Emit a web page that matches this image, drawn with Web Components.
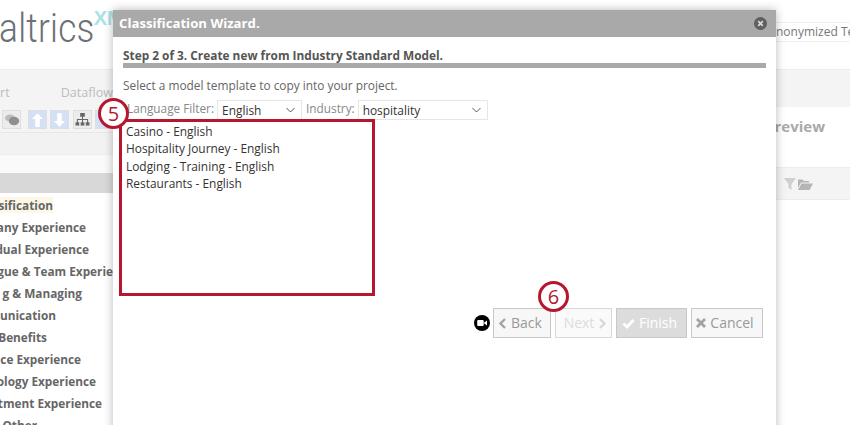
<!DOCTYPE html>
<html>
<head>
<meta charset="utf-8">
<title>Classification Wizard</title>
<style>
  html, body { margin: 0; height: 100%; overflow: hidden; background: #fff; font-family: "Open Sans", sans-serif; }
</style>
</head>
<body>
<app-page>
  <top-header slot="header"></top-header>
  <tool-panel slot="left"></tool-panel>
  <side-nav slot="left">
    <nav-row end="53" active>sification</nav-row>
    <nav-row end="86">any Experience</nav-row>
    <nav-row end="89">dual Experience</nav-row>
    <nav-row end="113">gue &amp; Team Experie</nav-row>
    <nav-row end="82">g &amp; Managing</nav-row>
    <nav-row end="56">unication</nav-row>
    <nav-row end="47">Benefits</nav-row>
    <nav-row end="81">ce Experience</nav-row>
    <nav-row end="96">ology Experience</nav-row>
    <nav-row end="102">ctment Experience</nav-row>
    <nav-row end="37">Other</nav-row>
  </side-nav>
  <preview-panel slot="right"></preview-panel>

  <wizard-dialog slot="overlay" heading="Classification Wizard.">
    <h2 slot="step">Step 2 of 3. Create new from Industry Standard Model.</h2>
    <span slot="intro">Select a model template to copy into your project.</span>
    <filter-select slot="filters" label="Language Filter:" value="English" width="85"></filter-select>
    <filter-select slot="filters" label="Industry:" value="hospitality" width="130"></filter-select>
    <div slot="models">Casino - English</div>
    <div slot="models">Hospitality Journey - English</div>
    <div slot="models">Lodging - Training - English</div>
    <div slot="models">Restaurants - English</div>
    <wizard-button slot="actions" icon="back" w="58">Back</wizard-button>
    <wizard-button slot="actions" icon="next" w="57" disabled>Next</wizard-button>
    <wizard-button slot="actions" icon="check" w="71" primary>Finish</wizard-button>
    <wizard-button slot="actions" icon="cancel" w="72">Cancel</wizard-button>
  </wizard-dialog>

  <step-callout slot="overlay" x="98" y="98">5</step-callout>
  <step-callout slot="overlay" x="538" y="281">6</step-callout>
</app-page>

<script>
function shadow(el, html) {
  el.attachShadow({ mode: 'open' }).innerHTML = html;
}

class AppPage extends HTMLElement {
  constructor() {
    super();
    shadow(this, `
      <style>
        :host { display: grid; position: relative; width: 850px; height: 425px; overflow: hidden;
          grid-template-columns: 400px 450px; grid-template-rows: 70px 355px; }
        .head { grid-column: 1 / 3; }
        .col { min-width: 0; }
      </style>
      <div class="head"><slot name="header"></slot></div>
      <div class="col"><slot name="left"></slot></div>
      <div class="col"><slot name="right"></slot></div>
      <slot name="overlay"></slot>
    `);
  }
}

class TopHeader extends HTMLElement {
  constructor() {
    super();
    shadow(this, `
      <style>
        :host { display: flex; height: 70px; box-sizing: border-box; justify-content: space-between;
          border-bottom: 1px solid #ececec; background: #fff; overflow: hidden; }
        .logo { display: flex; align-items: flex-start; width: 113px; overflow: hidden; }
        .name { font: 300 40px/1 Roboto, sans-serif; color: #6c7176; margin: 9px -14px 0 -1px; transform: scaleX(.88); transform-origin: left top; letter-spacing: .3px; }
        .xm { font: 700 20px/1 "Liberation Sans", sans-serif; color: #a9e3e8; margin-top: 8px; white-space: nowrap; }
        .project { align-self: flex-start; margin-top: 22px; width: 74px; height: 20px; box-sizing: border-box; overflow: hidden;
          border: 1px solid #f0f0f0; border-right: 0; border-left: 0; font: 12px/18px "Open Sans", sans-serif; color: #777; white-space: nowrap; }
      </style>
      <div class="logo"><span class="name">altrics</span><span class="xm">XM</span></div>
      <div class="project">nonymized Test</div>
    `);
  }
}

class ToolPanel extends HTMLElement {
  constructor() {
    super();
    const btn = (bg, svg, gap) => `<span class="b" style="background:${bg};margin-left:${gap || 0}px">${svg}</span>`;
    shadow(this, `
      <style>
        :host { display: block; background: #f4f4f4; }
        .menu { display: flex; gap: 51px; height: 40px; font: 12.600px/46px "Open Sans", sans-serif; color: #bdbdbd; justify-content: flex-end; width: 113px; white-space: nowrap; }
        .tools { display: flex; gap: 3px; box-sizing: border-box; height: 23px; padding-left: 2px; border-bottom: 1px solid #e8e8e8; }
        .b { display: flex; align-items: center; justify-content: center; box-sizing: border-box; width: 19px; height: 19px; border: 1px solid #dedede; }
        .sub { box-sizing: border-box; height: 22px; background: #f2f2f2; border-bottom: 1px solid #ededed; }
        .gap { height: 18px; background: #fafafa; }
        .bar { height: 20px; background: #d8d8d8; }
      </style>
      <div class="menu"><span>ort</span><span>Dataflow</span></div>
      <div class="tools">
        ${btn('#ececec', '<svg width="16" height="14" viewBox="0 0 16 14"><ellipse cx="6" cy="5" rx="5" ry="3.6" fill="#bdbdbd"/><ellipse cx="10" cy="8" rx="5.2" ry="4.2" fill="#8f8f8f"/></svg>')}
        ${btn('#d3e0f5', '<svg width="11" height="14" viewBox="0 0 12 15"><path d="M6 0l6 6.500H8.500V15h-5V6.500H0z" fill="#fff"/></svg>', 4)}
        ${btn('#d3e0f5', '<svg width="11" height="14" viewBox="0 0 12 15"><path d="M6 15L0 8.500H3.500V0h5V8.500H12z" fill="#fff"/></svg>')}
        ${btn('#ececec', '<svg width="15" height="13" viewBox="0 0 16 14" fill="none" stroke="#666" stroke-width="1.100"><path d="M8 3v8M2.500 11V7h11v4"/><rect x="5.500" y="0" width="5" height="4" fill="#666" stroke="none"/><rect x="0.500" y="10" width="4" height="3.500" fill="#666" stroke="none"/><rect x="6" y="10" width="4" height="3.500" fill="#666" stroke="none"/><rect x="11.500" y="10" width="4" height="3.500" fill="#666" stroke="none"/></svg>', 1)}
        ${btn('#d3e0f5', '')}
      </div>
      <div class="sub"></div>
      <div class="gap"></div>
      <div class="bar"></div>
    `);
  }
}

class SideNav extends HTMLElement {
  constructor() {
    super();
    shadow(this, `
      <style>:host { display: flex; flex-direction: column; gap: 6px; padding-top: 4px; background: #fff; }</style>
      <slot></slot>
    `);
  }
}

class NavRow extends HTMLElement {
  constructor() {
    super();
    shadow(this, `
      <style>
        :host { display: flex; justify-content: flex-end; height: 16px; white-space: nowrap;
          font: 700 11.800px/17px "Open Sans", sans-serif; color: #666; }
        :host([active]) { background: #fdf8e6; }
      </style>
      <slot></slot>
    `);
  }
  connectedCallback() {
    this.style.width = this.getAttribute('end') + 'px';
  }
}

class PreviewPanel extends HTMLElement {
  constructor() {
    super();
    shadow(this, `
      <style>
        :host { display: block; }
        .band { height: 37px; background: #f4f4f4; }
        .title { height: 60px; box-sizing: border-box; padding: 7px 25px 0 0; text-align: right; font: 700 15px/24px "Open Sans", sans-serif; color: #a9a9a9; }
        .tools { display: flex; justify-content: flex-end; align-items: center; gap: 2px; height: 33px; box-sizing: border-box; padding-right: 37px;
          background: #f4f4f4; border-top: 1px solid #ececec; border-bottom: 1px solid #ececec; }
      </style>
      <div class="band"></div>
      <div class="title">review</div>
      <div class="tools">
        <svg width="12" height="12" viewBox="0 0 12 12"><path d="M0 0h12L7.500 6v6l-3-2V6z" fill="#cfcfcf"/></svg>
        <svg width="15" height="12" viewBox="0 0 15 12"><path d="M0 1.500h4.500L6 3h5v1.500H3L0 10z M3.500 5.500H15L11.500 12H0z" fill="#b5b5b5"/></svg>
      </div>
    `);
  }
}

class WizardDialog extends HTMLElement {
  constructor() {
    super();
    shadow(this, `
      <style>
        :host { display: flex; flex-direction: column; position: absolute; left: 113px; top: 10px; width: 663px; height: 425px;
          background: #fff; box-shadow: 0 0 9px rgba(0, 0, 0, .28); color: #555; font: 12px/17px "Open Sans", sans-serif; }
        .title { display: flex; align-items: center; justify-content: space-between; height: 27px; padding: 0 9px 0 6px; background: #a9a9a9;
          color: #fff; font: 700 13.200px/27px "Open Sans", sans-serif; }
        .close { width: 13px; height: 13px; }
        .body { display: flex; flex-direction: column; padding: 10px 10px 0 7px; }
        .step { border-bottom: 5px solid #a9a9a9; margin-left: 3px; height: 16px; }
        ::slotted(h2) { margin: 0; font: 700 11.850px/17px "Open Sans", sans-serif; color: #555; }
        .intro { margin: 9px 0 0 3px; height: 17px; color: #666; font-size: 11.870px; }
        .filters { display: flex; gap: 4px; margin: 6px 0 0 7px; height: 19px; }
        .models { box-sizing: border-box; width: 256px; height: 177px; margin-left: -1px; padding: 0 4px; border: 3px solid #b5182e; color: #333; font-size: 11.900px; line-height: 17.300px; white-space: nowrap; }
        .list { margin-top: 1px; }
        .actions { display: flex; justify-content: flex-end; align-items: center; gap: 4px; margin: 12px 3px 0 0; }
        .video { margin-right: -1px; }
      </style>
      <div class="title">
        <span class="heading"></span>
        <svg class="close" viewBox="0 0 13 13"><circle cx="6.500" cy="6.500" r="6.500" fill="#5f5f5f"/><path d="M4.200 4.200l4.600 4.600M8.800 4.200l-4.600 4.600" stroke="#d8d8d8" stroke-width="1.800"/></svg>
      </div>
      <div class="body">
        <div class="step"><slot name="step"></slot></div>
        <div class="intro"><slot name="intro"></slot></div>
        <div class="filters"><slot name="filters"></slot></div>
        <div class="models"><div class="list"><slot name="models"></slot></div></div>
        <div class="actions">
          <svg class="video" width="16" height="16" viewBox="0 0 16 16"><circle cx="8" cy="8" r="8" fill="#000"/><rect x="3.200" y="5" width="6.500" height="6" rx="1" fill="#fff"/><path d="M10.200 7.500l2.800-2v5l-2.800-2z" fill="#fff"/></svg>
          <slot name="actions"></slot>
        </div>
      </div>
    `);
    this.shadowRoot.querySelector('.heading').textContent = this.getAttribute('heading');
  }
}

class FilterSelect extends HTMLElement {
  constructor() {
    super();
    shadow(this, `
      <style>
        :host { display: flex; gap: 3px; align-items: flex-start; }
        .label { color: #888; font: 11.800px/17px "Open Sans", sans-serif; white-space: nowrap; }
        .box { display: flex; justify-content: space-between; align-items: center; box-sizing: border-box; height: 20px; padding: 0 6px 0 4px;
          border: 1px solid #e6e6e6; color: #333; font: 11.900px/18px "Open Sans", sans-serif; }
      </style>
      <span class="label"></span>
      <span class="box"><span class="val"></span>
        <svg width="9" height="6" viewBox="0 0 9 6" fill="none" stroke="#555" stroke-width="1"><path d="M.5 1l4 4 4-4"/></svg>
      </span>
    `);
    const root = this.shadowRoot;
    root.querySelector('.label').textContent = this.getAttribute('label');
    root.querySelector('.val').textContent = this.getAttribute('value');
    root.querySelector('.box').style.width = this.getAttribute('width') + 'px';
  }
}

const BUTTON_ICONS = {
  back: '<svg width="9" height="11" viewBox="0 0 9 11" fill="none" stroke="currentColor" stroke-width="2.400"><path d="M7 1L2.500 5.500 7 10"/></svg>',
  next: '<svg width="9" height="11" viewBox="0 0 9 11" fill="none" stroke="currentColor" stroke-width="2.400"><path d="M2 1l4.500 4.500L2 10"/></svg>',
  check: '<svg width="13" height="11" viewBox="0 0 13 11" fill="none" stroke="currentColor" stroke-width="2.800"><path d="M1.500 5.500L5 9l6.500-7"/></svg>',
  cancel: '<svg width="10" height="10" viewBox="0 0 10 10" fill="none" stroke="currentColor" stroke-width="2.800"><path d="M1 1l8 8M9 1L1 9"/></svg>'
};

class WizardButton extends HTMLElement {
  constructor() {
    super();
    shadow(this, `
      <style>
        :host { display: flex; align-items: center; justify-content: center; gap: 4px; box-sizing: border-box; height: 30px;
          border: 1px solid #c8c8c8; background: #f7f7f7; color: #999; font: 14px/28px "Open Sans", sans-serif; }
        :host([disabled]) { color: #dcdcdc; background: #fafafa; border-color: #d8d8d8; }
        :host([primary]) { background: #dcdcdc; color: #fff; border-color: #c8c8c8; }
        .i { display: flex; color: #a3a3a3; }
        :host([disabled]) .i { color: #d8d8d8; }
        :host([primary]) .i { color: #fff; }
      </style>
      <span class="i" id="before"></span><slot></slot><span class="i" id="after"></span>
    `);
    const icon = this.getAttribute('icon');
    const spot = icon === 'next' ? 'after' : 'before';
    this.shadowRoot.getElementById(spot).innerHTML = BUTTON_ICONS[icon];
    this.style.width = this.getAttribute('w') + 'px';
  }
}

class StepCallout extends HTMLElement {
  constructor() {
    super();
    shadow(this, `
      <style>
        :host { display: flex; position: absolute; align-items: center; justify-content: center; box-sizing: border-box; width: 31px; height: 31px;
          border: 3px solid #b5182e; border-radius: 50%; background: #fff; color: #b5182e; font: 500 20px/1 "Open Sans", sans-serif; }
      </style>
      <slot></slot>
    `);
    this.style.left = this.getAttribute('x') + 'px';
    this.style.top = this.getAttribute('y') + 'px';
  }
}

customElements.define('app-page', AppPage);
customElements.define('top-header', TopHeader);
customElements.define('tool-panel', ToolPanel);
customElements.define('side-nav', SideNav);
customElements.define('nav-row', NavRow);
customElements.define('preview-panel', PreviewPanel);
customElements.define('wizard-dialog', WizardDialog);
customElements.define('filter-select', FilterSelect);
customElements.define('wizard-button', WizardButton);
customElements.define('step-callout', StepCallout);
</script>
</body>
</html>
